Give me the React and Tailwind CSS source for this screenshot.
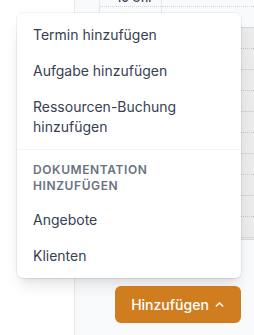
import React from "react";

function ChevronUp() {
  return (
    <svg width="11" height="11" viewBox="0 0 24 24" fill="none" stroke="white" strokeWidth="3.2" strokeLinecap="round" strokeLinejoin="round">
      <path d="M5 15.5l7-7 7 7" />
    </svg>
  );
}

function Row() {
  return (
    <div className="h-[42px] border-t border-[#d6d7d8] flex flex-col">
      <div className="h-[20px]" />
      <div className="border-t border-dotted border-[#c4c5c7]" />
    </div>
  );
}

export default function App() {
  return (
    <div className="relative w-[254px] h-[335px] overflow-hidden flex bg-white font-['Inter',sans-serif]">
      <div className="w-[75px] shrink-0 border-r border-[#e5e7eb] bg-white" />
      <div className="flex-1 flex flex-col bg-[#f9fafb]">
        <div className="h-[27px] flex shrink-0">
          <div className="w-[25px] border-r border-[#e5e7eb]" />
          <div className="w-[62px] border-r border-[#e5e7eb] flex flex-col">
            <div className="h-[6px]">
              <div className="-mt-[10px] pl-[8px] text-center text-xs leading-4 font-medium text-gray-700">10 Uhr</div>
            </div>
            <div className="border-t border-dotted border-[#cfd2d6]" />
          </div>
          <div className="flex-1 flex flex-col">
            <div className="h-[6px]" />
            <div className="border-t border-dotted border-[#cfd2d6]" />
          </div>
        </div>
        <div className="flex">
          <div className="flex-1" />
          <div className="w-[60px] bg-[#ebebeb] flex flex-col border-b border-[#d6d7d8]">
            <Row />
            <Row />
            <Row />
            <Row />
            <Row />
            <div className="h-[2px] border-t border-[#d6d7d8]" />
          </div>
        </div>
      </div>

      <div className="absolute left-[17px] top-[13px] flex flex-col items-end gap-[8px]">
        <div className="w-[224px] rounded-md bg-white shadow-lg ring-1 ring-black/5 divide-y divide-gray-100">
          <div className="py-1">
            <div className="px-4 py-2 text-sm leading-5 text-gray-700">Termin hinzufügen</div>
            <div className="px-4 py-2 text-sm leading-5 text-gray-700">Aufgabe hinzufügen</div>
            <div className="px-4 py-2 text-sm leading-5 text-gray-700">Ressourcen-Buchung<br />hinzufügen</div>
          </div>
          <div className="py-1">
            <div className="px-4 py-2 text-xs leading-4 font-semibold uppercase tracking-wider text-gray-500">Dokumentation hinzufügen</div>
            <div className="px-4 py-2 text-sm leading-5 text-gray-700">Angebote</div>
            <div className="px-4 py-2 text-sm leading-5 text-gray-700">Klienten</div>
          </div>
        </div>
        <button className="w-[126px] h-[37px] rounded-md bg-[#cf7d1f] text-white text-sm font-medium flex items-center justify-center gap-[5px]">
          <span>Hinzufügen</span>
          <ChevronUp />
        </button>
      </div>
    </div>
  );
}
